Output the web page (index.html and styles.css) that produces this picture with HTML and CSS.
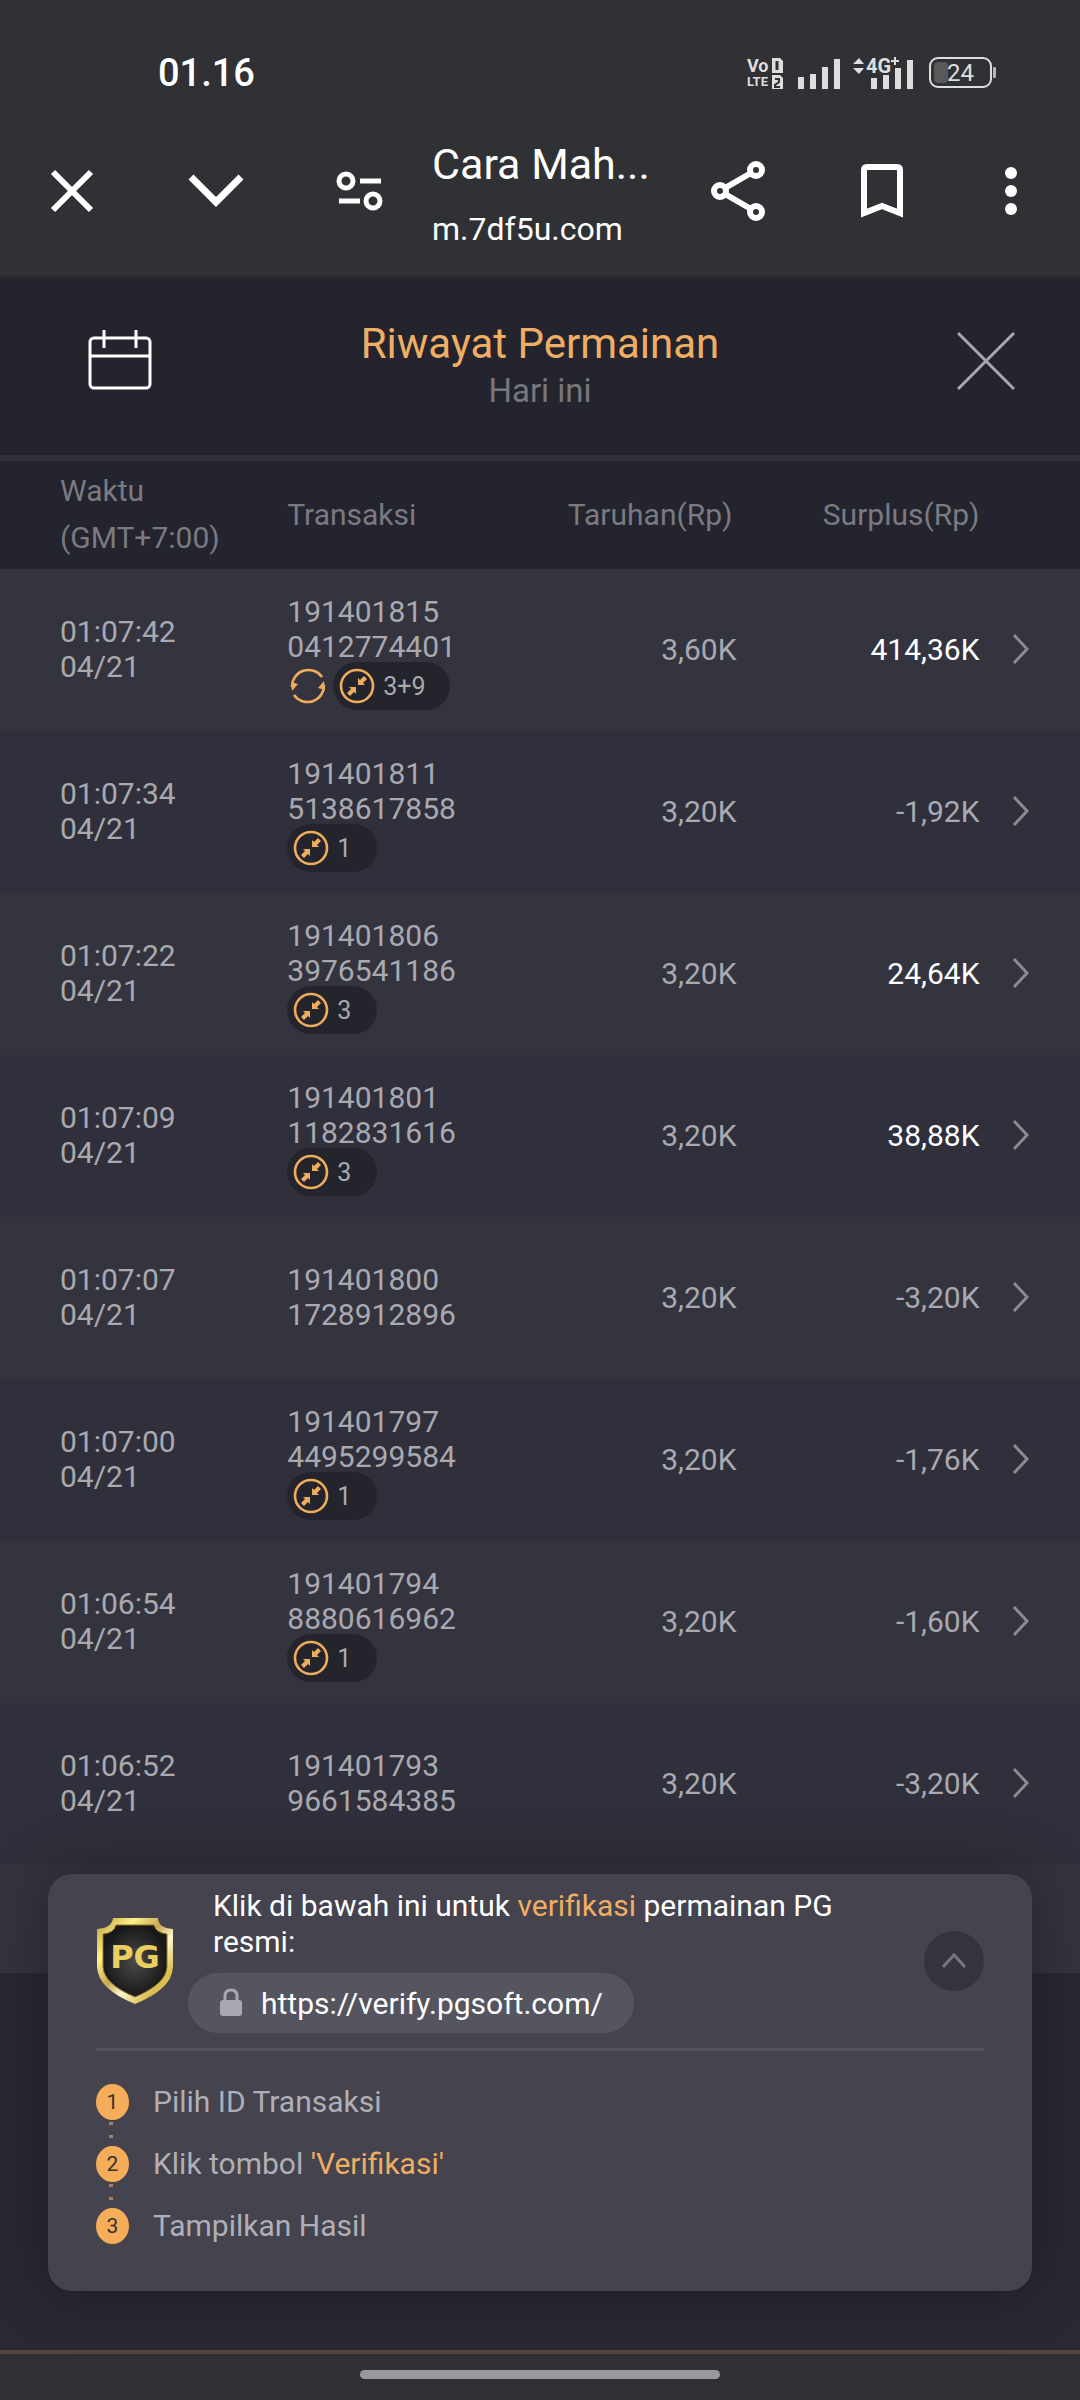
FILE: index.html
```html
<!DOCTYPE html>
<html lang="id">
<head>
    <meta charset="UTF-8">
    <meta name="viewport" content="width=device-width, initial-scale=1.0">
    <title>Riwayat Permainan</title>
    <link rel="stylesheet" href="styles.css">
</head>
<body>
    <!-- Shared icons -->
    <svg class="sprite" aria-hidden="true">
        <symbol id="icon-next" viewBox="0 0 18 32">
            <path d="M2 2 L15 16 L2 30" fill="none" stroke="currentColor" stroke-width="3"/>
        </symbol>
        <symbol id="icon-collapse" viewBox="0 0 36 36">
            <circle cx="18" cy="18" r="16" fill="none" stroke="currentColor" stroke-width="2.6"/>
            <path d="M8 25 L12 21 L10 19 H17 V26 L15 24 L11 28 Z" fill="currentColor"/>
            <path d="M28 11 L24 15 L26 17 H19 V10 L21 12 L25 8 Z" fill="currentColor"/>
        </symbol>
        <symbol id="icon-replay" viewBox="0 0 36 36">
            <path d="M32 9 A16.500 16.500 0 0 0 2 19" fill="none" stroke="currentColor" stroke-width="2.6"/>
            <path d="M4 27 A16.500 16.500 0 0 0 34 17" fill="none" stroke="currentColor" stroke-width="2.6"/>
            <path d="M1 14 L8 16 L2 23 Z" fill="currentColor"/>
            <path d="M35 22 L28 20 L34 13 Z" fill="currentColor"/>
        </symbol>
    </svg>

    <div class="browser">
        <div class="status-bar">
            <span class="clock">01.16</span>
            <div class="status-icons">
                <svg width="37" height="34" viewBox="0 0 37 34">
                    <text class="volte-top" x="0" y="16">Vo</text>
                    <text class="volte-bottom" x="0" y="30">LTE</text>
                    <path d="M25 2 H33 L36 5 V17 H25 Z M25 19 H33 L36 22 V33 H25 Z" fill="#dedede"/>
                    <path d="M30 5 V14" stroke="#303134" stroke-width="3"/>
                    <path d="M28 23 H32 V26 L28 29 V31 H33" fill="none" stroke="#303134" stroke-width="2"/>
                </svg>
                <svg class="signal" width="44" height="34" viewBox="0 0 44 34">
                    <path d="M3 21 V33 M15 18 V33 M27 11 V33 M39 3 V33" stroke="#dedede" stroke-width="6"/>
                </svg>
                <svg class="signal-data" width="62" height="36" viewBox="0 0 62 36">
                    <path d="M0 9 L6 3 L11 9 Z M0 13 H11 L6 19 Z" fill="#dedede"/>
                    <text class="net" x="13" y="18">4G</text>
                    <path d="M42 2 V10 M38 6 H46" stroke="#dedede" stroke-width="2"/>
                    <path d="M21 23 V34 M33 20 V34 M45 13 V34 M57 5 V34" stroke="#dedede" stroke-width="6"/>
                </svg>
                <svg width="68" height="34" viewBox="0 0 68 34">
                    <rect x="1" y="2" width="61" height="29" rx="8" fill="none" stroke="#dedede" stroke-width="2"/>
                    <rect x="5" y="6" width="14" height="21" rx="4" fill="#58595b"/>
                    <rect x="64" y="11" width="3" height="11" rx="1" fill="#b5b5b6"/>
                    <text class="battery" x="18" y="25">24</text>
                </svg>
            </div>
        </div>

        <div class="toolbar">
            <button class="tool" aria-label="Tutup tab">
                <svg width="44" height="44" viewBox="0 0 44 44"><path d="M3 3 L41 41 M41 3 L3 41" stroke="#fff" stroke-width="6"/></svg>
            </button>
            <button class="tool" aria-label="Perkecil">
                <svg width="56" height="34" viewBox="0 0 56 34"><path d="M3 3 L28 28 L53 3" fill="none" stroke="#fff" stroke-width="7"/></svg>
            </button>
            <button class="tool" aria-label="Info situs">
                <svg width="48" height="40" viewBox="0 0 48 40" fill="none" stroke="#fff">
                    <circle cx="10" cy="10" r="7" stroke-width="5"/>
                    <circle cx="37" cy="30" r="7" stroke-width="5"/>
                    <path d="M24 10 H45 M3 30 H24" stroke-width="5"/>
                </svg>
            </button>
            <div class="page-info">
                <span class="page-title">Cara Mah...</span>
                <span class="page-url">m.7df5u.com</span>
            </div>
            <button class="tool" aria-label="Bagikan">
                <svg width="54" height="62" viewBox="0 0 54 62" fill="none" stroke="#fff" stroke-width="6">
                    <circle cx="9" cy="31" r="6"/>
                    <circle cx="45" cy="10" r="6"/>
                    <circle cx="45" cy="52" r="6"/>
                    <path d="M14 28 L40 13 M14 34 L40 49"/>
                </svg>
            </button>
            <button class="tool" aria-label="Bookmark">
                <svg width="42" height="54" viewBox="0 0 42 54"><path d="M3 49 V6 Q3 3 6 3 H36 Q39 3 39 6 V49 L21 42 Z" fill="none" stroke="#fff" stroke-width="6"/></svg>
            </button>
            <button class="tool tool-menu" aria-label="Menu">
                <svg width="12" height="48" viewBox="0 0 12 48" fill="#fff"><circle cx="6" cy="6" r="6"/><circle cx="6" cy="24" r="6"/><circle cx="6" cy="42" r="6"/></svg>
            </button>
        </div>
    </div>

    <main class="history">
        <header class="history-header">
            <button class="header-btn" aria-label="Pilih tanggal">
                <svg width="64" height="70" viewBox="0 0 64 70" fill="none" stroke="#fff" stroke-width="3">
                    <rect x="2" y="8" width="60" height="50" rx="4"/>
                    <path d="M2 26 H62 M16 0 V18 M48 0 V18"/>
                </svg>
            </button>
            <div class="heading">
                <h1>Riwayat Permainan</h1>
                <p>Hari ini</p>
            </div>
            <button class="header-btn close-btn" aria-label="Tutup">
                <svg width="58" height="70" viewBox="0 0 58 70"><path d="M1 3 L57 59 M57 3 L1 59" stroke="#a9a8ad" stroke-width="3"/></svg>
            </button>
        </header>

        <table class="history-table">
            <thead>
                <tr>
                    <th class="col-time">Waktu<br>(GMT+7:00)</th>
                    <th class="col-id">Transaksi</th>
                    <th class="col-bet">Taruhan(Rp)</th>
                    <th class="col-surplus">Surplus(Rp)</th>
                    <th class="col-next"></th>
                </tr>
            </thead>
            <tbody>
                <tr>
                    <td class="col-time">01:07:42<br>04/21</td>
                    <td class="col-id">191401815<br>0412774401
                        <div class="tags">
                            <svg class="tag-icon replay"><use href="#icon-replay"/></svg>
                            <span class="tag"><svg class="tag-icon"><use href="#icon-collapse"/></svg>3+9</span>
                        </div>
                    </td>
                    <td class="col-bet">3,60K</td>
                    <td class="col-surplus win">414,36K</td>
                    <td class="col-next"><button aria-label="Detail"><svg><use href="#icon-next"/></svg></button></td>
                </tr>
                <tr>
                    <td class="col-time">01:07:34<br>04/21</td>
                    <td class="col-id">191401811<br>5138617858
                        <div class="tags">
                            <span class="tag"><svg class="tag-icon"><use href="#icon-collapse"/></svg>1</span>
                        </div>
                    </td>
                    <td class="col-bet">3,20K</td>
                    <td class="col-surplus">-1,92K</td>
                    <td class="col-next"><button aria-label="Detail"><svg><use href="#icon-next"/></svg></button></td>
                </tr>
                <tr>
                    <td class="col-time">01:07:22<br>04/21</td>
                    <td class="col-id">191401806<br>3976541186
                        <div class="tags">
                            <span class="tag"><svg class="tag-icon"><use href="#icon-collapse"/></svg>3</span>
                        </div>
                    </td>
                    <td class="col-bet">3,20K</td>
                    <td class="col-surplus win">24,64K</td>
                    <td class="col-next"><button aria-label="Detail"><svg><use href="#icon-next"/></svg></button></td>
                </tr>
                <tr>
                    <td class="col-time">01:07:09<br>04/21</td>
                    <td class="col-id">191401801<br>1182831616
                        <div class="tags">
                            <span class="tag"><svg class="tag-icon"><use href="#icon-collapse"/></svg>3</span>
                        </div>
                    </td>
                    <td class="col-bet">3,20K</td>
                    <td class="col-surplus win">38,88K</td>
                    <td class="col-next"><button aria-label="Detail"><svg><use href="#icon-next"/></svg></button></td>
                </tr>
                <tr>
                    <td class="col-time">01:07:07<br>04/21</td>
                    <td class="col-id">191401800<br>1728912896</td>
                    <td class="col-bet">3,20K</td>
                    <td class="col-surplus">-3,20K</td>
                    <td class="col-next"><button aria-label="Detail"><svg><use href="#icon-next"/></svg></button></td>
                </tr>
                <tr>
                    <td class="col-time">01:07:00<br>04/21</td>
                    <td class="col-id">191401797<br>4495299584
                        <div class="tags">
                            <span class="tag"><svg class="tag-icon"><use href="#icon-collapse"/></svg>1</span>
                        </div>
                    </td>
                    <td class="col-bet">3,20K</td>
                    <td class="col-surplus">-1,76K</td>
                    <td class="col-next"><button aria-label="Detail"><svg><use href="#icon-next"/></svg></button></td>
                </tr>
                <tr>
                    <td class="col-time">01:06:54<br>04/21</td>
                    <td class="col-id">191401794<br>8880616962
                        <div class="tags">
                            <span class="tag"><svg class="tag-icon"><use href="#icon-collapse"/></svg>1</span>
                        </div>
                    </td>
                    <td class="col-bet">3,20K</td>
                    <td class="col-surplus">-1,60K</td>
                    <td class="col-next"><button aria-label="Detail"><svg><use href="#icon-next"/></svg></button></td>
                </tr>
                <tr>
                    <td class="col-time">01:06:52<br>04/21</td>
                    <td class="col-id">191401793<br>9661584385</td>
                    <td class="col-bet">3,20K</td>
                    <td class="col-surplus">-3,20K</td>
                    <td class="col-next"><button aria-label="Detail"><svg><use href="#icon-next"/></svg></button></td>
                </tr>
                <tr class="row-rest">
                    <td colspan="5"></td>
                </tr>
            </tbody>
        </table>

        <!-- Verification card, floats over the list -->
        <section class="verify-card">
            <div class="verify-top">
                <svg class="verify-logo" width="78" height="88" viewBox="0 0 78 88">
                    <defs>
                        <linearGradient id="gold" x1="0" y1="0" x2="1" y2="1">
                            <stop offset="0" stop-color="#b79a35"/>
                            <stop offset="0.25" stop-color="#fff08a"/>
                            <stop offset="0.45" stop-color="#c9a850"/>
                            <stop offset="0.6" stop-color="#fff6cf"/>
                            <stop offset="0.8" stop-color="#d9bd4c"/>
                            <stop offset="1" stop-color="#f7e37a"/>
                        </linearGradient>
                        <radialGradient id="dark">
                            <stop offset="0" stop-color="#4a4a4a"/>
                            <stop offset="1" stop-color="#181818"/>
                        </radialGradient>
                    </defs>
                    <path d="M17 1 H62 Q62 11 77 12 V50 Q76 72 39 87 Q2 72 1 50 V12 Q16 11 17 1 Z" fill="url(#gold)"/>
                    <path d="M20 8 H58 Q60 16 71 17 V50 Q70 67 39 80 Q8 67 7 50 V17 Q18 16 20 8 Z" fill="url(#dark)" stroke="#8d7428" stroke-width="1"/>
                    <text class="pg" x="39" y="51" text-anchor="middle">PG</text>
                </svg>
                <div class="verify-body">
                    <p>Klik di bawah ini untuk <span class="accent">verifikasi</span> permainan PG<br>resmi:</p>
                    <a class="verify-link" href="https://verify.pgsoft.com/">
                        <svg width="24" height="30" viewBox="0 0 24 30">
                            <path d="M6 13 V8 Q6 2 12 2 Q18 2 18 8 V13" fill="none" stroke="#a9a8b0" stroke-width="3"/>
                            <rect x="1" y="12" width="22" height="16" rx="3" fill="#a9a8b0"/>
                        </svg>
                        https://verify.pgsoft.com/
                    </a>
                </div>
                <button class="verify-toggle" aria-label="Sembunyikan">
                    <svg width="24" height="18" viewBox="0 0 24 18"><path d="M1 15 L12 3 L23 15" fill="none" stroke="#76757e" stroke-width="3"/></svg>
                </button>
            </div>
            <ol class="steps">
                <li><span class="step-num">1</span><span class="step-text">Pilih ID Transaksi</span></li>
                <li><span class="step-num">2</span><span class="step-text">Klik tombol <span class="accent">'Verifikasi'</span></span></li>
                <li><span class="step-num">3</span><span class="step-text">Tampilkan Hasil</span></li>
            </ol>
        </section>
    </main>

    <footer class="nav-bar"><span class="nav-handle"></span></footer>
</body>
</html>
```
FILE: styles.css
```css
* {
    box-sizing: border-box;
}
body {
    margin: 0;
    min-height: 100vh;
    display: flex;
    flex-direction: column;
    font-family: Roboto, "Liberation Sans", sans-serif;
    font-size: 30px;
    line-height: 35px;
    color: #a9a9af;
    background: #292933;
}
button {
    padding: 0;
    border: none;
    background: none;
    cursor: pointer;
}
svg {
    display: block;
}
.sprite {
    display: none;
}
.accent {
    color: #efae63;
}

/* Browser chrome */
.browser {
    background: #303134;
    border-bottom: 3px solid #2c2c30;
    padding-bottom: 5px;
    color: #fff;
}
.status-bar {
    display: flex;
    justify-content: space-between;
    align-items: center;
    height: 112px;
    padding: 34px 83px 0 158px;
}
.clock {
    font-size: 38px;
    font-weight: 500;
}
.status-icons {
    display: flex;
    align-items: center;
    gap: 14px;
}
.signal-data {
    margin-left: -3px;
}
.status-icons text {
    fill: #dedede;
    font-weight: 700;
}
.status-icons .volte-top {
    font-size: 18px;
}
.status-icons .volte-bottom {
    font-size: 13px;
}
.status-icons .net {
    font-size: 20px;
}
.status-icons .battery {
    font-size: 24px;
    font-weight: 400;
}
.toolbar {
    display: flex;
    align-items: center;
    height: 158px;
    padding-right: 12px;
}
.tool {
    display: flex;
    flex: 0 0 144px;
    height: 96px;
    align-items: center;
    justify-content: center;
}
.tool-menu {
    flex-basis: 114px;
}
.page-info {
    display: flex;
    flex: 1;
    flex-direction: column;
    min-width: 0;
    white-space: nowrap;
}
.page-title {
    font-size: 43px;
    line-height: 76px;
}
.page-url {
    font-size: 32px;
    line-height: 54px;
}

/* History page */
.history {
    position: relative;
    flex: 1;
}
.history-header {
    display: grid;
    grid-template-columns: 1fr auto 1fr;
    align-items: center;
    height: 183px;
    padding: 0 65px 3px;
    background: #24242e;
    border-bottom: 6px solid #30303c;
}
.header-btn {
    justify-self: start;
    padding-left: 23px;
}
.close-btn {
    justify-self: end;
}
.heading {
    text-align: center;
}
.heading h1 {
    margin: 0;
    font-size: 42px;
    line-height: 52px;
    font-weight: 400;
    color: #efae63;
}
.heading p {
    margin: 0;
    font-size: 33px;
    line-height: 42px;
    color: #77777e;
}
.history-table {
    width: 100%;
    table-layout: fixed;
    border-collapse: collapse;
}
.history-table th {
    height: 108px;
    padding: 0 0 2px;
    font-weight: 400;
    line-height: 47px;
    text-align: left;
    color: #7a7a81;
    background: #24242e;
}
.history-table td {
    height: 162px;
    padding: 0 0 2px;
}
.history-table tbody tr {
    background: #30303c;
}
.history-table tbody tr:nth-child(odd) {
    background: #34343f;
}
.history-table .row-rest td {
    height: 108px;
}
.history-table .col-time {
    width: 26.6%;
    padding-left: 60px;
}
.history-table .col-id {
    width: 23.4%;
}
.history-table .col-bet {
    width: 18.2%;
    text-align: right;
}
.history-table .col-surplus {
    width: 22.5%;
    text-align: right;
}
.history-table th.col-bet {
    padding-right: 4px;
}
.history-table .col-next {
    width: 9.3%;
    padding-left: 32px;
}
.col-next button {
    display: block;
    color: #8a8a91;
}
.col-next svg {
    width: 18px;
    height: 32px;
}
.history-table .win {
    color: #fff;
}
.tags {
    display: flex;
    align-items: center;
    margin: -2px 0 -6px;
}
.tag {
    display: flex;
    align-items: center;
    gap: 8px;
    min-width: 90px;
    height: 48px;
    padding: 0 24px 0 6px;
    border-radius: 24px;
    font-size: 25px;
    background: #24242d;
}
.tag-icon {
    width: 36px;
    height: 36px;
    color: #f0ac5d;
}
.replay {
    margin: 0 7px 0 3px;
}

/* Verification card */
.verify-card {
    position: absolute;
    left: 48px;
    right: 48px;
    bottom: 59px;
    padding: 0 48px;
    border-radius: 24px;
    background: #44434e;
    box-shadow: 0 0 60px rgba(0, 0, 0, 0.35);
}
.verify-top {
    display: flex;
    align-items: center;
    gap: 14px;
    padding: 14px 0 15px;
    border-bottom: 3px solid #52515c;
    color: #fff;
}
.verify-body {
    flex: 1;
}
.verify-body p {
    margin: 0 0 13px;
    padding: 0 0 0 25px;
    line-height: 36px;
}
.verify-link {
    display: inline-flex;
    align-items: center;
    gap: 18px;
    height: 60px;
    padding: 0 31px;
    border-radius: 30px;
    vertical-align: top;
    color: #fff;
    text-decoration: none;
    background: #555560;
}
.verify-toggle {
    display: flex;
    align-items: center;
    justify-content: center;
    width: 60px;
    height: 60px;
    border-radius: 50%;
    background: #34343f;
}
.pg {
    fill: #e9cf62;
    font-family: "DejaVu Sans", sans-serif;
    font-size: 32px;
    font-weight: 700;
}
.steps {
    display: flex;
    flex-direction: column;
    margin: 0;
    padding: 33px 0 47px;
    list-style: none;
    line-height: 36px;
    color: #b0afb6;
}
.steps li {
    display: flex;
    gap: 24px;
}
/* dotted connector between two steps */
.steps li:not(:last-child) {
    padding-bottom: 26px;
    background: radial-gradient(circle, #a27f60 2px, transparent 2px) 13px 33px / 4px 13px repeat-y;
}
.step-num {
    width: 33px;
    height: 36px;
    border-radius: 50%;
    font-size: 21px;
    text-align: center;
    color: #35322f;
    background: #f5ad5a;
}

/* Gesture bar */
.nav-bar {
    display: flex;
    justify-content: center;
    height: 50px;
    padding-top: 16px;
    border-top: 4px solid #57453a;
    background: #303134;
}
.nav-handle {
    width: 33.4%;
    height: 9px;
    border-radius: 5px;
    background: #98999b;
}
```
